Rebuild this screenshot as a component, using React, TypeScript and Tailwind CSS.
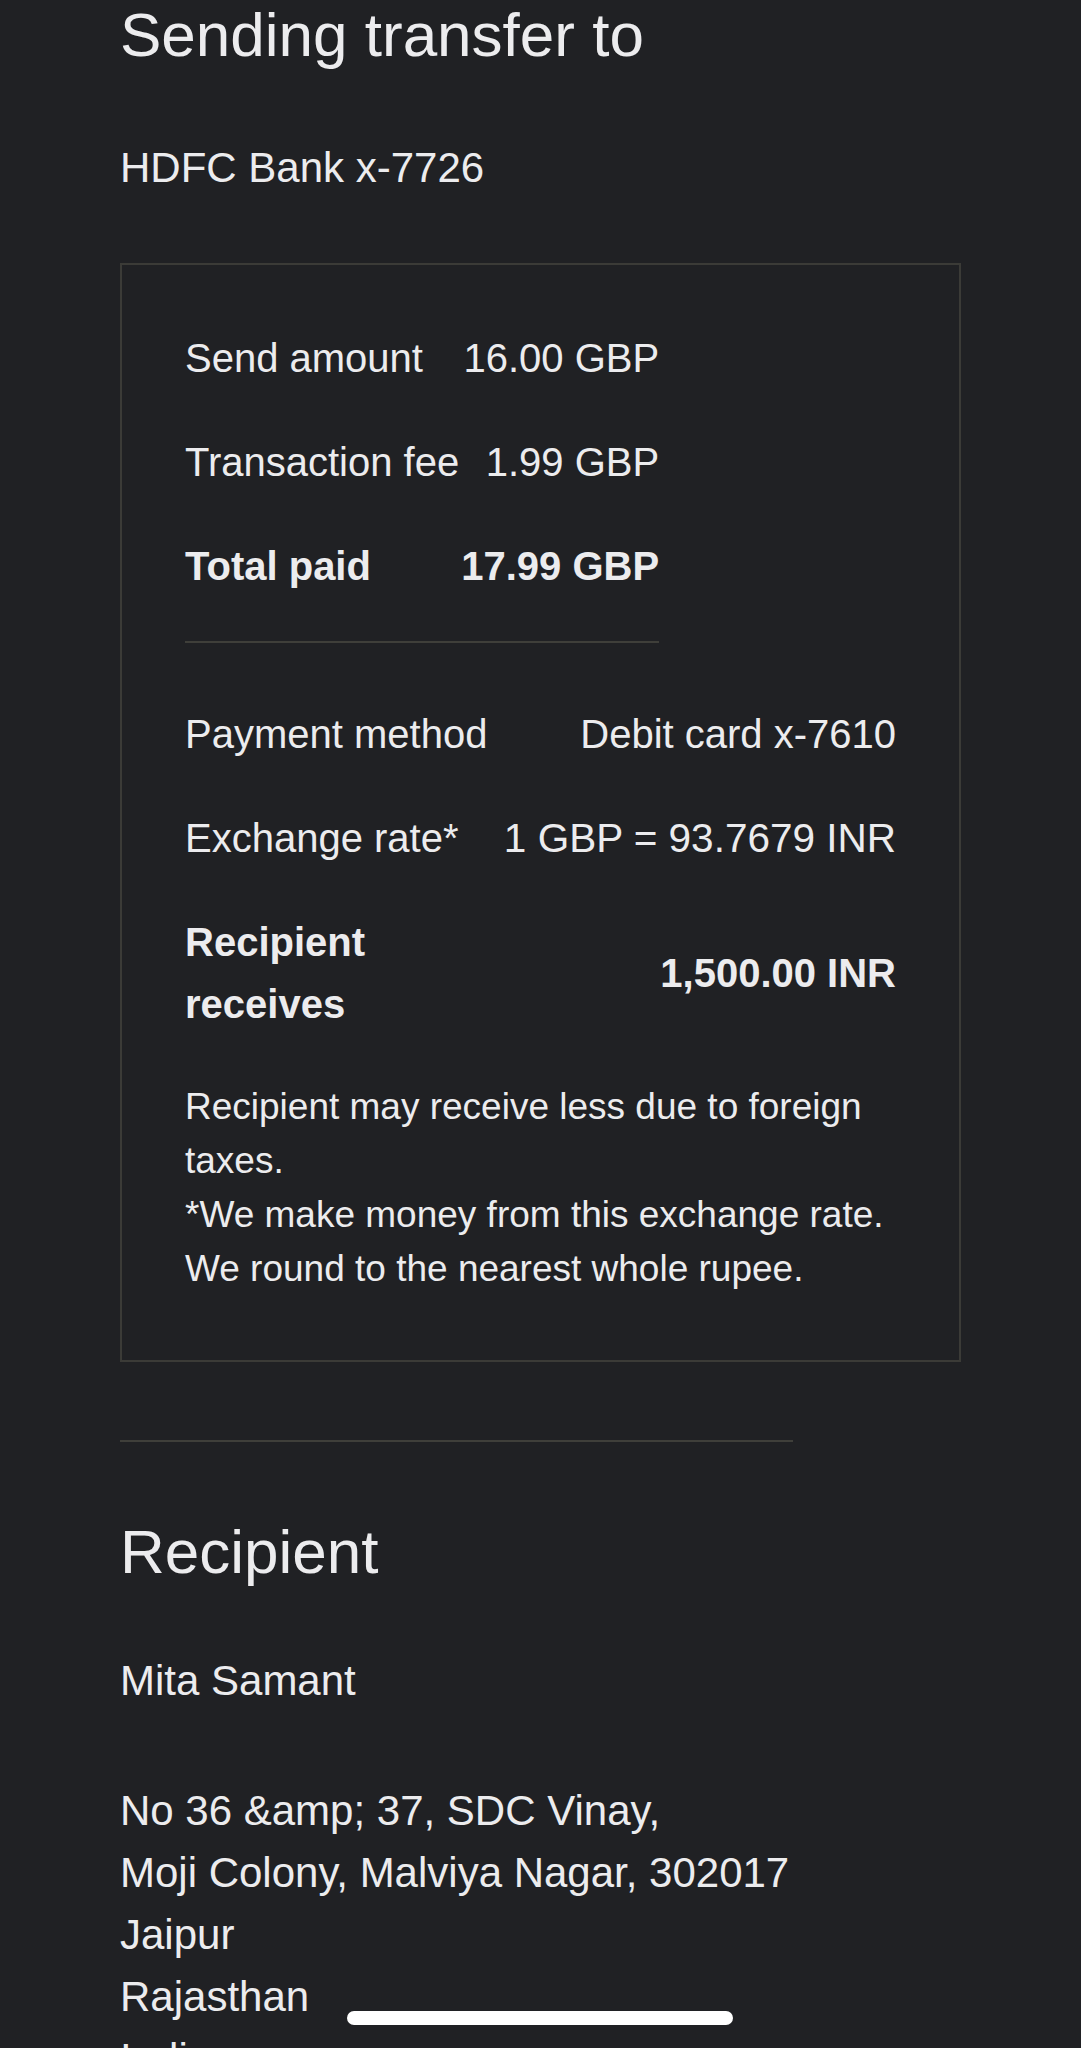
import React from "react";

const Row1 = ({ label, value, bold }: { label: string; value: string; bold?: boolean }) => (
  <>
    <div className={`py-[21px] text-[40px] leading-[62px] ${bold ? "font-bold" : ""}`}>{label}</div>
    <div className={`py-[21px] text-right text-[40px] leading-[62px] ${bold ? "font-bold" : ""}`}>{value}</div>
  </>
);

export default function App() {
  return (
    <div className="relative h-[2048px] overflow-hidden bg-[#202124] text-[#ececee] [font-family:'Liberation_Sans',Arial,sans-serif]">
      <div className="px-[120px] pt-[4px]">
        <h1 className="text-[62px] leading-[62px] font-normal">Sending transfer to</h1>
        <p className="mt-[71px] text-[42px] leading-[62px]">HDFC Bank x-7726</p>

        <div className="mt-[64px] border-2 border-[#3b3b37] px-[63px] pt-[41px] pb-[64px]">
          <div className="w-fit">
            <div className="grid grid-cols-[auto_auto] gap-x-[2px] items-center">
              <Row1 label="Send amount" value="16.00 GBP" />
              <Row1 label="Transaction fee" value="1.99 GBP" />
              <Row1 label="Total paid" value="17.99 GBP" bold />
            </div>
            <div className="mt-[23px] h-[2px] w-full bg-[#3f3f3a]" />
          </div>

          <div className="mt-[39px] grid grid-cols-[1fr_auto] items-center">
            <Row1 label="Payment method" value="Debit card x-7610" />
            <div className="py-[21px] text-[40px] leading-[62px]">Exchange rate*</div>
            <div className="py-[21px] text-right text-[40.5px] leading-[62px]">1 GBP = 93.7679 INR</div>
            <div className="py-[21px] text-[40px] leading-[62px] font-bold">Recipient receives</div>
            <div className="py-[21px] text-right text-[40px] leading-[62px] font-bold">1,500.00 INR</div>
          </div>

          <p className="mt-[24px] text-[37px] leading-[54px]">
            Recipient may receive less due to foreign taxes.
            <br />
            *We make money from this exchange rate.
            <br />
            We round to the nearest whole rupee.
          </p>
        </div>

        <div className="mt-[78px] h-[2px] w-[80%] bg-[#3f3f3a]" />

        <h2 className="mt-[79px] text-[62px] leading-[62px] font-normal">Recipient</h2>
        <p className="mt-[67px] text-[42px] leading-[62px]">Mita Samant</p>
        <p className="mt-[68px] text-[42px] leading-[62px]">
          No 36 &amp;amp; 37, SDC Vinay,
          <br />
          Moji Colony, Malviya Nagar, 302017
          <br />
          Jaipur
          <br />
          Rajasthan
          <br />
          India
        </p>
      </div>

      <div className="absolute left-[347px] top-[2011px] h-[14px] w-[386px] rounded-full bg-white" />
    </div>
  );
}
